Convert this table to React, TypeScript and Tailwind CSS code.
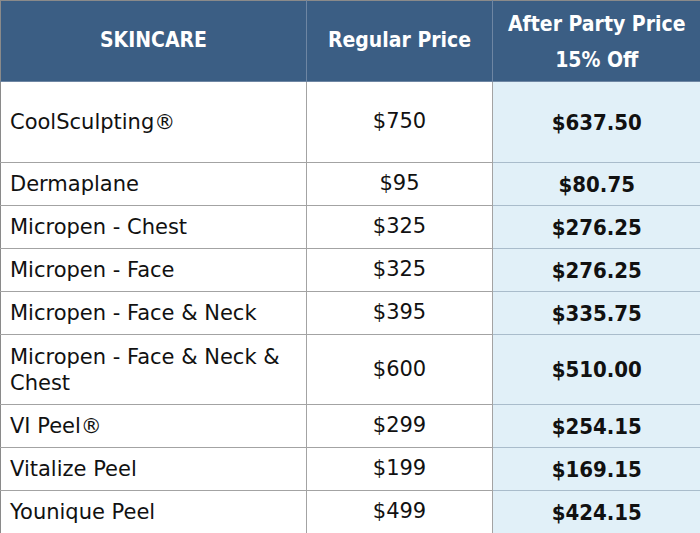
import React from 'react';

const rows = [
  { name: 'CoolSculpting®', regular: '$750', sale: '$637.50', h: 'h-[81px]' },
  { name: 'Dermaplane', regular: '$95', sale: '$80.75', h: 'h-[43px]' },
  { name: 'Micropen - Chest', regular: '$325', sale: '$276.25', h: 'h-[43px]' },
  { name: 'Micropen - Face', regular: '$325', sale: '$276.25', h: 'h-[43px]' },
  { name: 'Micropen - Face & Neck', regular: '$395', sale: '$335.75', h: 'h-[43px]' },
  { name: 'Micropen - Face & Neck & Chest', regular: '$600', sale: '$510.00', h: 'h-[70px]' },
  { name: 'VI Peel®', regular: '$299', sale: '$254.15', h: 'h-[43px]' },
  { name: 'Vitalize Peel', regular: '$199', sale: '$169.15', h: 'h-[43px]' },
  { name: 'Younique Peel', regular: '$499', sale: '$424.15', h: 'h-[43px]' },
];

const App = () => {
  return (
    <div className="w-[700px] h-[533px] overflow-hidden bg-white font-['DejaVu_Sans_Condensed','DejaVu_Sans',sans-serif] text-[21px] text-[#111]">
      <table className="w-[700px] table-fixed border-collapse">
        <colgroup>
          <col className="w-[306px]" />
          <col className="w-[186px]" />
          <col className="w-[208px]" />
        </colgroup>
        <thead>
          <tr className="h-[81px] bg-[#3b5e84] text-white font-bold">
            <th className="border border-[#6e86a3] border-l-[#8a8a8a] border-t-[#8a8a8a] font-bold">SKINCARE</th>
            <th className="border border-[#6e86a3] border-t-[#8a8a8a] font-bold">Regular Price</th>
            <th className="border border-[#6e86a3] border-t-[#8a8a8a] border-r-0 font-bold leading-[36px] pt-[1px]">
              After Party Price
              <br />
              15% Off
            </th>
          </tr>
        </thead>
        <tbody>
          {rows.map((r, i) => (
            <tr key={i} className={r.h}>
              <td className="border border-[#a3a3a3] border-l-[#8a8a8a] pl-[9px] pr-2 leading-[26px] text-left font-['DejaVu_Sans',sans-serif]">{r.name}</td>
              <td className="border border-[#a3a3a3] text-center font-['DejaVu_Sans',sans-serif]">{r.regular}</td>
              <td className="border border-[#a9bccb] border-r-0 bg-[#e1f0f8] text-center font-bold text-[22px]">{r.sale}</td>
            </tr>
          ))}
        </tbody>
      </table>
    </div>
  );
};

export default App;
